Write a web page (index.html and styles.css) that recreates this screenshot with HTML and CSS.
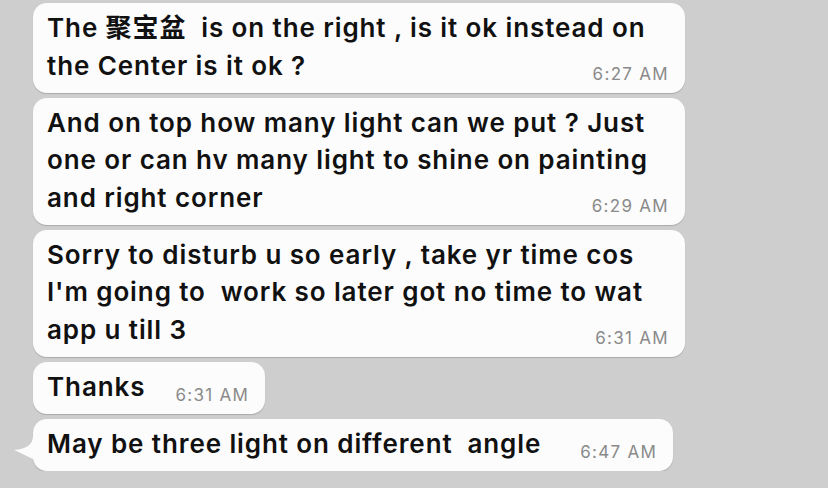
FILE: index.html
```html
<!DOCTYPE html>
<html lang="en">
<head>
    <meta charset="UTF-8">
    <title>Chat</title>
    <link rel="stylesheet" href="styles.css">
</head>
<body>

<main class="chat">
    <div class="bubble long">
        <p class="text">The 聚宝盆&nbsp; is on the right , is it ok instead on<br>the Center is it ok ?</p>
        <span class="time">6:27 AM</span>
    </div>
    <div class="bubble long">
        <p class="text">And on top how many light can we put ? Just<br>one or can hv many light to shine on painting<br>and right corner</p>
        <span class="time">6:29 AM</span>
    </div>
    <div class="bubble long">
        <p class="text">Sorry to disturb u so early , take yr time cos<br>I'm going to&nbsp; work so later got no time to wat<br>app u till 3</p>
        <span class="time">6:31 AM</span>
    </div>
    <div class="bubble short">
        <p class="text">Thanks</p>
        <span class="time">6:31 AM</span>
    </div>
    <div class="bubble short last">
        <svg class="tail" width="22" height="26" viewBox="0 0 22 26">
            <path d="M20 0 C20 8 14 13 1 14 C8 17 14 20 22 24 L22 0 Z" fill="#fcfcfc"/>
        </svg>
        <p class="text">May be three light on different&nbsp; angle</p>
        <span class="time">6:47 AM</span>
    </div>
</main>

</body>
</html>
```

FILE: styles.css
```css
body {
    margin: 0;
    padding: 0;
    background: #cecece;
    font-family: Inter, "Noto Sans CJK SC", sans-serif;
    color: #111;
}
.chat {
    display: flex;
    flex-direction: column;
    align-items: flex-start;
    gap: 5px;
    padding: 3px 0 0 33px;
}
.bubble {
    position: relative;
    background: #fcfcfc;
    border-radius: 14px;
    box-shadow: 0 1px 1px rgba(0, 0, 0, 0.18);
    padding: 6px 16px 8.5px 14px;
}
.text {
    margin: 0;
    font-size: 26px;
    font-weight: 600;
    letter-spacing: 0.9px;
    line-height: 37.5px;
}
.time {
    font-size: 17px;
    line-height: 17px;
    color: #8a8a8a;
    letter-spacing: 1.3px;
    white-space: nowrap;
}
.bubble.long {
    display: grid;
    width: 652px;
    box-sizing: border-box;
}
.bubble.long .text,
.bubble.long .time {
    grid-area: 1 / 1;
}
.bubble.long .time {
    align-self: end;
    justify-self: end;
    margin-bottom: 1px;
}
.bubble.short {
    display: flex;
    align-items: flex-end;
    gap: 30px;
}
.bubble.short.last {
    gap: 39px;
}
.bubble.short .time {
    margin-bottom: 1px;
}
.tail {
    position: absolute;
    left: -20px;
    bottom: 9px;
}
```
